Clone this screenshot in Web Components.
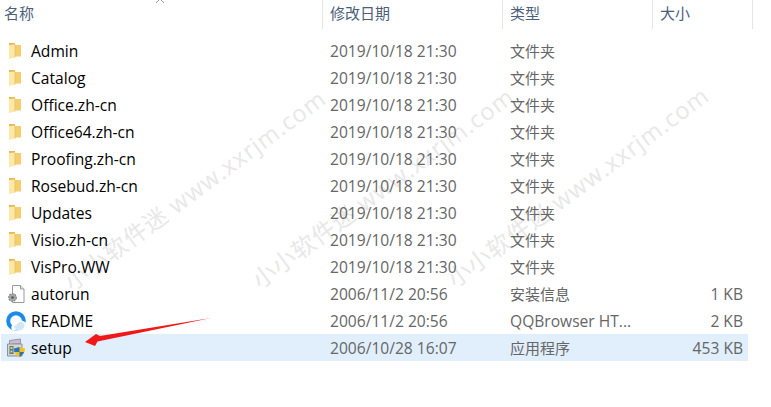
<!DOCTYPE html>
<html lang="zh">
<head>
<meta charset="utf-8">
<title>setup</title>
<style>
  html, body { margin: 0; background: #fff; }
  body { font: 15px "Open Sans", "Noto Sans CJK SC", sans-serif; overflow: hidden; }
</style>
</head>
<body>
<file-list>
  <col-head slot="head" label="名称" style="--w:323px"></col-head>
  <col-head slot="head" label="修改日期" style="--w:180px"></col-head>
  <col-head slot="head" label="类型" style="--w:150px"></col-head>
  <col-head slot="head" label="大小" style="--w:100px"></col-head>

  <file-row icon="folder" name="Admin" date="2019/10/18 21:30" kind="文件夹"></file-row>
  <file-row icon="folder" name="Catalog" date="2019/10/18 21:30" kind="文件夹"></file-row>
  <file-row icon="folder" name="Office.zh-cn" date="2019/10/18 21:30" kind="文件夹"></file-row>
  <file-row icon="folder" name="Office64.zh-cn" date="2019/10/18 21:30" kind="文件夹"></file-row>
  <file-row icon="folder" name="Proofing.zh-cn" date="2019/10/18 21:30" kind="文件夹"></file-row>
  <file-row icon="folder" name="Rosebud.zh-cn" date="2019/10/18 21:30" kind="文件夹"></file-row>
  <file-row icon="folder" name="Updates" date="2019/10/18 21:30" kind="文件夹"></file-row>
  <file-row icon="folder" name="Visio.zh-cn" date="2019/10/18 21:30" kind="文件夹"></file-row>
  <file-row icon="folder" name="VisPro.WW" date="2019/10/18 21:30" kind="文件夹"></file-row>
  <file-row icon="inf" name="autorun" date="2006/11/2 20:56" kind="安装信息" size="1 KB"></file-row>
  <file-row icon="qq" name="README" date="2006/11/2 20:56" kind="QQBrowser HT..." size="2 KB"></file-row>
  <file-row icon="setup" name="setup" date="2006/10/28 16:07" kind="应用程序" size="453 KB" selected></file-row>
</file-list>

<script>
const icons = {
  folder: `<svg width="16" height="18" viewBox="0 0 16 18">
    <path d="M1 1h6v2h6v11.500H1z" fill="#f4cd6c"/>
    <path d="M1 1h6v2H1z" fill="#e6b84e"/>
    <path d="M1 3l6-.5v13L1 17z" fill="#fde8a8"/>
    <path d="M7 2.500v13" stroke="#e9c066" stroke-width=".8"/>
  </svg>`,
  inf: `<svg width="20" height="20" viewBox="0 0 20 20">
    <path d="M6.500 1.500h8l3.500 3.500v13.500H6.500z" fill="#fff" stroke="#9a9a9a"/>
    <path d="M14.500 1.500V5H18" fill="#eee" stroke="#9a9a9a"/>
    <circle cx="6.500" cy="13.500" r="3.800" fill="#a5a8aa" stroke="#888" stroke-width="1.200" stroke-dasharray="1.800 1"/>
    <circle cx="6.500" cy="13.500" r="1.300" fill="#555"/>
  </svg>`,
  qq: `<svg width="20" height="20" viewBox="0 0 20 20">
    <circle cx="10" cy="10" r="7.800" fill="#fff" stroke="#1a8be8" stroke-width="4"/>
    <path d="M7 19.500c-1.500-1-2-2.500-1.500-4 .5-1.700 2.300-3 4.300-2.500 1-2.600 3.600-4.200 6-3.500 1.500.4 3.200 1.200 4.200 2.500v7.500z" fill="#fff"/>
    <path d="M8 15.500c.4-1.200 1.200-1.500 2.500-1.300 .8-2.400 2.800-3.700 4.800-3.200 1.700.4 3 1.700 3.200 3.500-.5 2-1.500 3.500-3 4.500H10z" fill="#d3e5f6"/>
  </svg>`,
  setup: `<svg width="20" height="20" viewBox="0 0 20 20">
    <path d="M3.500 2.500l11-1.500v4.500L3.500 6.500z" fill="#c9bcd0" stroke="#8b8398" stroke-width=".8"/>
    <path d="M1.500 6h14.500v12H1.500z" fill="#d3d6d8" stroke="#8d9394"/>
    <path d="M3.500 8h4v8h-4z" fill="#5f7a63"/>
    <path d="M4.500 9h2v2h-2zM4.500 12.500h2v2h-2z" fill="#c2d2b8"/>
    <path d="M13.500 9l5.500 1.500c0 4-1.800 6.800-5.500 8.500-3.700-1.700-5.500-4.500-5.500-8.500z" fill="#f4c216"/>
    <path d="M13.500 9v5H8.200c0-1 0-2.500-.2-3.500zM13.500 14h4.600c-.8 2.200-2.300 3.800-4.600 5z" fill="#2a70c4"/>
  </svg>`
};

// header cell with the little divider on its right side
customElements.define("col-head", class extends HTMLElement {
  constructor() {
    super();
    const root = this.attachShadow({ mode: "open" });
    root.innerHTML = `
      <style>
        :host {
          display: flex;
          align-items: center;
          box-sizing: border-box;
          width: var(--w);
          height: 29px;
          padding: 0 0 5px 7px;
          border-right: 1px solid #e5e5e5;
          color: #4c607a;
        }
        :host(:first-child) { padding-left: 4px; }
      </style>
      <span>${this.getAttribute("label")}</span>`;
  }
});

customElements.define("file-row", class extends HTMLElement {
  constructor() {
    super();
    const root = this.attachShadow({ mode: "open" });
    const a = n => this.getAttribute(n) || "";
    const kindSize = /[\u4e00-\u9fff]/.test(a("kind")) ? "15px" : "15.6px";
    root.innerHTML = `
      <style>
        :host {
          display: grid;
          grid-template-columns: 329px 180px 150px 83px;
          align-items: center;
          box-sizing: border-box;
          width: 747px;
          height: 27px;
          margin-left: 1px;
          font-size: 15.6px;
        }
        :host([selected]) { background: #e1effc; }
        .name { display: flex; align-items: center; color: #000; }
        .ic { display: flex; justify-content: center; width: 30px; }
        .cell { color: #666; white-space: nowrap; }
        .kind { font-size: ${kindSize}; }
        .size { text-align: right; }
      </style>
      <div class="name"><span class="ic">${icons[a("icon")]}</span><span>${a("name")}</span></div>
      <div class="cell">${a("date")}</div>
      <div class="cell kind">${a("kind")}</div>
      <div class="cell size">${a("size")}</div>`;
  }
});

customElements.define("file-list", class extends HTMLElement {
  constructor() {
    super();
    const root = this.attachShadow({ mode: "open" });
    const marks = [[194, 189], [382, 187], [577, 186]].map(([x, y]) =>
      `<div class="mark" style="left:${x}px;top:${y}px">小小软件迷 www.xxrjm.com</div>`).join("");
    root.innerHTML = `
      <style>
        :host { display: block; position: relative; isolation: isolate; width: 771px; height: 407px; overflow: hidden; }
        .head { display: flex; }
        .rows { padding-top: 8px; }
        .chev { position: absolute; left: 155px; top: -2px; }
        .mark {
          position: absolute;
          z-index: -1;
          transform: translate(-50%, -50%) rotate(-36.500deg);
          font-size: 23.500px;
          letter-spacing: 1px;
          white-space: nowrap;
          color: #e8e8e8;
        }
        .arrow { position: absolute; left: 0; top: 0; }
      </style>
      ${marks}
      <div class="head"><slot name="head"></slot></div>
      <svg class="chev" width="10" height="5" viewBox="0 0 10 5"><path d="M1 5l4-4 4 4" fill="none" stroke="#9a9a9a"/></svg>
      <div class="rows"><slot></slot></div>
      <svg class="arrow" width="771" height="407" viewBox="0 0 771 407">
        <path d="M211 318 L100 336 L96 334 L85 342 L95 346 L97.500 341.500z" fill="#f01818"/>
      </svg>`;
  }
});
</script>
</body>
</html>
